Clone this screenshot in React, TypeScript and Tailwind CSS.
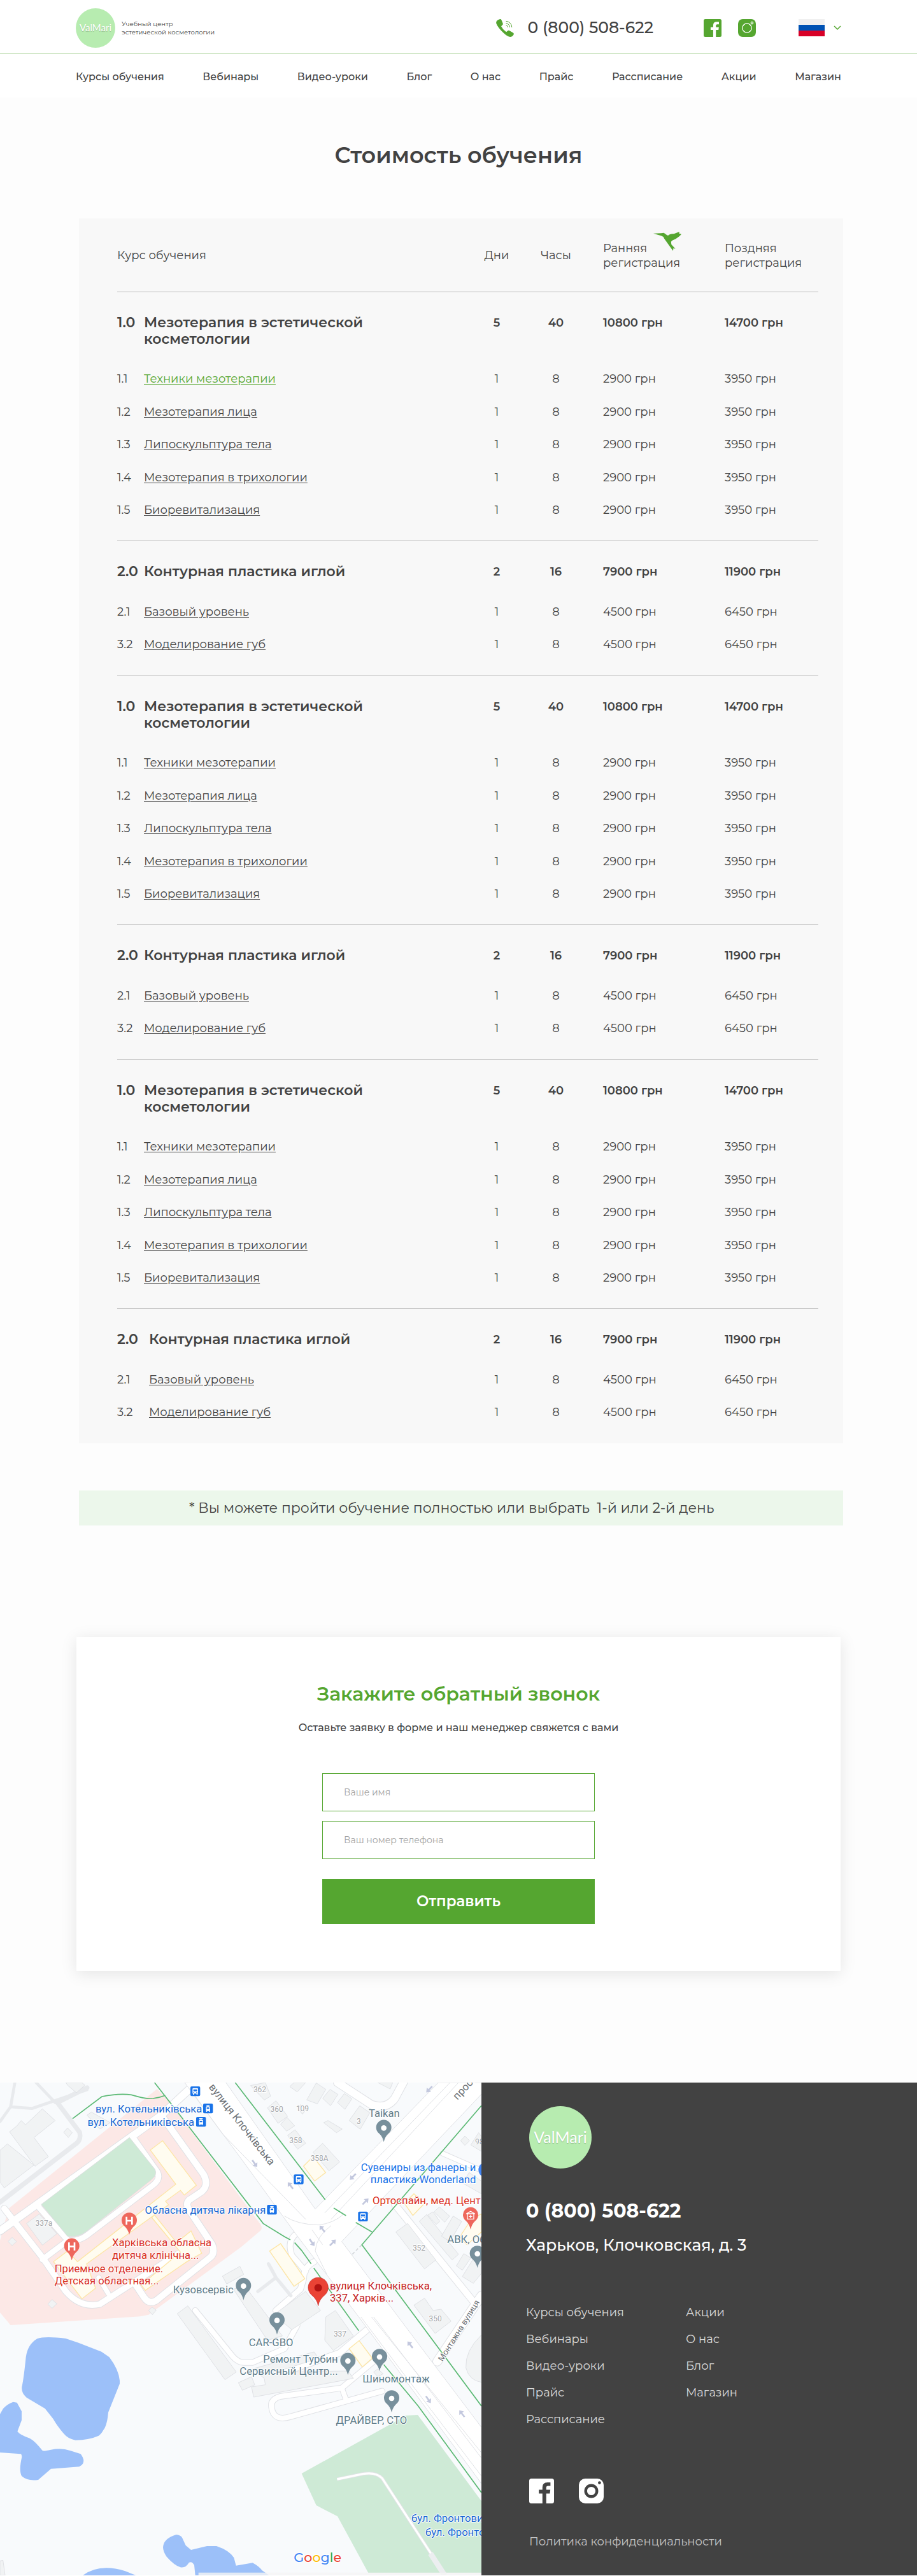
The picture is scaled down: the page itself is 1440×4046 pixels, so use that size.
import type { ReactNode } from "react";

type Lesson = { num: string; name: string; early: string; late: string; active?: boolean };
type Group = {
  num: string;
  name: string;
  days: string;
  hours: string;
  early: string;
  late: string;
  wide?: boolean;
  lessons: Lesson[];
};

const mesoLessons: Lesson[] = [
  "Техники мезотерапии",
  "Мезотерапия лица",
  "Липоскульптура тела",
  "Мезотерапия в трихологии",
  "Биоревитализация",
].map((name, i) => ({ num: `1.${i + 1}`, name, early: "2900 грн", late: "3950 грн" }));

const meso: Group = {
  num: "1.0",
  name: "Мезотерапия в эстетической косметологии",
  days: "5",
  hours: "40",
  early: "10800 грн",
  late: "14700 грн",
  lessons: mesoLessons,
};

const contour: Group = {
  num: "2.0",
  name: "Контурная пластика иглой",
  days: "2",
  hours: "16",
  early: "7900 грн",
  late: "11900 грн",
  lessons: [
    { num: "2.1", name: "Базовый уровень", early: "4500 грн", late: "6450 грн" },
    { num: "3.2", name: "Моделирование губ", early: "4500 грн", late: "6450 грн" },
  ],
};

const groups: Group[] = [
  { ...meso, lessons: mesoLessons.map((l, i) => ({ ...l, active: i === 0 })) },
  contour,
  meso,
  contour,
  meso,
  { ...contour, wide: true },
];

const nav = ["Курсы обучения", "Вебинары", "Видео-уроки", "Блог", "О нас", "Прайс", "Рассписание", "Акции", "Магазин"];

function PhoneIcon() {
  return (
    <svg viewBox="0 0 28 28" className="size-7 shrink-0" aria-hidden="true">
      <path
        fill="#55a630"
        d="M3 1.2 6.2.1Q7.8-.2 8.5 1.5L10.6 6.6Q11.2 8.4 9.8 9.6L8 11.2Q10.600 16.600 16 20.200L18.200 18.400Q19.600 17.400 21.200 18.300L26.800 21.600Q28.400 22.700 27.500 24.400 25.600 27.800 22.200 27.900 18 27.700 12 22 2.500 13 .2 6.400-.3 3 3 1.200Z"
      />
      <g fill="none" stroke="#55a630" strokeWidth="1">
        <path d="M15.600 3.400a9.500 9.500 0 0 1 9.200 9.600" />
        <path d="M15.600 6.600a6.500 6.500 0 0 1 6 6.400" />
        <path d="M15.600 9.800a3.300 3.300 0 0 1 3 3.200" />
      </g>
    </svg>
  );
}

function FacebookIcon({ className }: { className: string }) {
  return (
    <svg viewBox="0 0 39 39" className={className} fill="currentColor" fillRule="evenodd" aria-hidden="true">
      <path d="M3.500 0h32A3.500 3.500 0 0 1 39 3.500v32a3.500 3.500 0 0 1-3.500 3.500H26.800V23.600h5.600l.8-6H26.800V14q0-2.600 2.800-2.600H33.400V6h-4.600Q20.800 6 20.800 13.600v4H15.200v6h5.600V39H3.500A3.500 3.500 0 0 1 0 35.500v-32A3.500 3.500 0 0 1 3.500 0Z" />
    </svg>
  );
}

function InstagramIcon({ className, outlined }: { className: string; outlined?: boolean }) {
  return (
    <svg viewBox="0 0 39 39" className={className} aria-hidden="true">
      <rect width="39" height="39" rx="10" fill="currentColor" />
      <circle
        cx="19.500"
        cy="19.500"
        r={outlined ? 10 : 8.8}
        fill="none"
        stroke={outlined ? "#fff" : "#424242"}
        strokeWidth={outlined ? 1.8 : 4.4}
      />
      {outlined ? (
        <circle cx="30.500" cy="8.500" r="2.300" fill="none" stroke="#fff" strokeWidth="1.800" />
      ) : (
        <circle cx="32.400" cy="6.600" r="2.400" fill="#424242" />
      )}
    </svg>
  );
}

function Logo({ large }: { large?: boolean }) {
  return (
    <a
      href="#"
      className={
        large
          ? "flex size-[98px] items-center justify-center rounded-full bg-[#b7ecb0] font-[Lato,sans-serif] text-[25px] text-white"
          : "flex size-[62px] shrink-0 items-center justify-center rounded-full bg-[#b7ecb0] font-[Lato,sans-serif] text-[15px] text-white"
      }
    >
      <span className="[text-shadow:0_1px_1px_rgb(0_0_0/0.2)]">ValMari</span>
    </a>
  );
}

function Header() {
  return (
    <header className="bg-white text-[#424242]">
      <div className="border-b-2 border-[#d3e8ca]">
        <div className="mx-auto flex min-h-[83px] max-w-[1202px] items-center pt-1">
          <Logo />
          <p className="ml-[10px] text-[10px] leading-[13px]">
            Учебный центр
            <br />
            эстетической косметологии
          </p>
          <a href="tel:0800508622" className="ml-auto flex items-center gap-[22px] text-[25px] font-medium">
            <PhoneIcon />
            0 (800) 508-622
          </a>
          <div className="ml-[79px] flex gap-[26px] text-[#55a630]">
            <a href="#" aria-label="Facebook">
              <FacebookIcon className="size-7" />
            </a>
            <a href="#" aria-label="Instagram">
              <InstagramIcon className="size-7" outlined />
            </a>
          </div>
          <button type="button" aria-label="Выбрать язык" className="ml-[67px] flex items-center gap-[14px]">
            <span className="flex h-[27px] w-[41px] flex-col">
              <span className="flex-1 bg-[#f0f0f0]" />
              <span className="flex-1 bg-[#0052b4]" />
              <span className="flex-1 bg-[#d80027]" />
            </span>
            <svg viewBox="0 0 12 8" className="h-2 w-3" fill="none" stroke="#55a630" strokeWidth="1.500" aria-hidden="true">
              <path d="m1 1 5 5 5-5" />
            </svg>
          </button>
        </div>
      </div>
      <nav className="mx-auto flex min-h-[68px] max-w-[1202px] items-center justify-between pt-1 text-base font-medium">
        {nav.map((n) => (
          <a key={n} href="#">
            {n}
          </a>
        ))}
      </nav>
    </header>
  );
}

function Hummingbird() {
  return (
    <svg
      viewBox="0 0 98 90"
      preserveAspectRatio="none"
      className="absolute -top-[15px] left-[79px] h-[30px] w-[44px]"
      aria-hidden="true"
    >
      <path
        fill="#55a630"
        d="M0 8 27 7 36 5Q42 8 44 13L51 18 57 13Q64 9 72 10L91 0 90 8 98 11 92 20Q80 34 65 42L62 47 63 60 77 80 70 78 69 90 61 76 38 32 35 24 27 19Z"
      />
    </svg>
  );
}

function Cells({ values, bold }: { values: string[]; bold?: boolean }) {
  const [days, hours, early, late] = values;
  const tone = bold ? "align-top pt-[35px] leading-[26px] font-semibold" : "";
  return (
    <>
      <td className={`text-center ${tone}`}>{days}</td>
      <td className={`text-center ${tone}`}>{hours}</td>
      <td className={`pl-[27px] ${tone}`}>{early}</td>
      <td className={tone}>{late}</td>
    </>
  );
}

function PriceTable() {
  return (
    <div className="bg-[#f8f8f8] pr-[39px] pl-[60px]">
      <table className="w-full table-fixed border-collapse text-left text-lg text-[#424242]">
        <colgroup>
          <col />
          <col className="w-[92px]" />
          <col className="w-[94px]" />
          <col className="w-[218px]" />
          <col className="w-[147px]" />
        </colgroup>
        <thead>
          <tr className="h-[115px] leading-[23px]">
            <th className="pt-[3px] font-normal">Курс обучения</th>
            <th className="pt-[3px] text-center font-normal">Дни</th>
            <th className="pt-[3px] text-center font-normal">Часы</th>
            <th className="pt-[3px] pl-[27px] font-normal">
              <span className="relative block">
                Ранняя
                <br />
                регистрация
                <Hummingbird />
              </span>
            </th>
            <th className="pt-[3px] font-normal">
              Поздняя
              <br />
              регистрация
            </th>
          </tr>
        </thead>
        {groups.map((g, i) => (
          <tbody key={i} className="border-t border-[#b8b8b8]">
            <tr>
              <th className="pt-[35px] pb-6 align-top text-[22px] leading-[26px] font-semibold">
                <span className="flex">
                  <span className={g.wide ? "w-[50px] shrink-0" : "w-[42px] shrink-0"}>{g.num}</span>
                  <span className="max-w-[400px]">{g.name}</span>
                </span>
              </th>
              <Cells bold values={[g.days, g.hours, g.early, g.late]} />
            </tr>
            {g.lessons.map((l) => (
              <tr key={l.num} className="h-[51px] odd:h-[52px]">
                <td>
                  <span className="flex">
                    <span className={g.wide ? "w-[50px] shrink-0" : "w-[42px] shrink-0"}>{l.num}</span>
                    <a
                      href="#"
                      className={
                        l.active ? "text-[#55a630] underline underline-offset-2" : "underline underline-offset-2"
                      }
                    >
                      {l.name}
                    </a>
                  </span>
                </td>
                <Cells values={["1", "8", l.early, l.late]} />
              </tr>
            ))}
            <tr className="h-[23px]">
              <td colSpan={5} />
            </tr>
          </tbody>
        ))}
      </table>
    </div>
  );
}

function CallbackForm() {
  const field =
    "h-[60px] w-full border border-[#55a630] bg-white px-[33px] text-sm text-[#424242] outline-none placeholder:text-[#a3a3a3]";
  return (
    <form
      className="mx-auto flex max-w-[1200px] flex-col items-center bg-white pt-[71px] pb-[74px] shadow-[0_4px_24px_rgb(0_0_0/0.1)]"
      onSubmit={(e) => e.preventDefault()}
    >
      <h2 className="text-3xl leading-[38px] font-semibold text-[#55a630]">Закажите обратный звонок</h2>
      <p className="mt-[22px] text-base leading-6 font-medium text-[#424242]">
        Оставьте заявку в форме и наш менеджер свяжется с вами
      </p>
      <div className="mt-[59px] flex w-full max-w-[428px] flex-col gap-[15px]">
        <input type="text" aria-label="Ваше имя" placeholder="Ваше имя" className={field} />
        <input type="tel" aria-label="Ваш номер телефона" placeholder="Ваш номер телефона" className={field} />
        <button type="submit" className="mt-4 h-[71px] bg-[#55a630] text-[23px] font-semibold text-white">
          Отправить
        </button>
      </div>
    </form>
  );
}

const buildings = [
  "80,240 100,215 120,235 200,160 260,215 160,295 228,385 165,430 45,268",
  "0,355 35,325 160,425 20,532 0,505",
  "300,270 318,250 340,272 322,295",
  "320,50 360,84 400,48 385,36 310,36",
  "410,190 430,175 520,225 470,255",
  "125,700 185,655 268,748 200,802",
  "38,785 57,766 78,785 57,804",
  "225,1080 245,1058 268,1078 245,1100",
  "700,1110 716,1094 736,1108 718,1130",
  "1048,948 1130,902 1148,940 1068,985",
  "835,1125 885,1088 1113,1400 1060,1436",
  "1100,1010 1150,990 1330,1230 1260,1250",
  "1180,50 1250,36 1275,100 1245,118",
  "1260,155 1300,122 1355,195 1310,228",
  "1322,232 1352,200 1388,240 1350,265",
  "1355,285 1390,258 1440,322 1402,350",
  "1365,55 1385,36 1440,36 1400,80",
  "1445,118 1490,38 1535,68 1495,136",
  "1520,110 1555,68 1592,92 1557,145",
  "1590,130 1622,88 1658,112 1625,162",
  "1645,215 1695,145 1742,178 1697,256",
  "1415,140 1440,165 1425,185 1405,160",
  "1525,225 1545,215 1612,255 1585,272",
  "1475,365 1520,322 1600,410 1550,452",
  "1780,36 1850,36 1838,66",
  "2170,310 2190,288 2212,310 2190,332",
  "2218,330 2255,272 2268,290 2268,360",
  "2180,510 2210,460 2268,500 2268,560",
  "1865,740 1920,700 2053,872 2000,914",
  "1975,690 2010,658 2160,845 2130,872",
  "2015,660 2040,645 2072,690 2055,704",
  "2045,645 2070,622 2118,665 2095,694",
  "2080,760 2135,665 2175,690 2120,785",
  "2150,900 2185,842 2218,862 2178,920",
  "2178,950 2240,850 2268,870 2268,935 2230,982",
  "1950,1085 2000,1052 2040,1110 2078,1104 2125,1160 2050,1218",
  "1290,1130 1440,1020 1510,1110 1375,1200",
  "1535,1140 1580,1110 1665,1230 1570,1298 1530,1250",
  "1190,1385 1480,1305 1500,1335 1300,1400 1640,1395 1665,1430 1195,1518 1185,1470 1250,1460 1245,1430",
  "1123,1450 1185,1422 1200,1460 1142,1486",
  "1760,1400 1780,1385 1805,1408 1780,1422",
  "1550,845 1570,838 1610,895 1592,904",
  "1600,912 1618,905 2268,1780 2268,1810",
  "0,2290 14,2287 24,2358 0,2358",
];

const yellowBuildings = [
  "708,354 766,310 925,520 868,566 850,544 780,595 794,612 408,890 450,1005 386,1055 252,880 318,830 365,880 828,515",
  "715,672 728,660 832,790 900,735 950,840 880,880 685,1015 665,990 850,835",
  "1270,830 1322,795 1436,960 1385,996",
  "1430,430 1475,385 1534,460 1482,500",
  "1905,605 1950,560 2000,605 1945,662",
  "2165,765 2220,680 2268,655 2268,740 2200,800",
  "1645,1290 1692,1252 1754,1335 1707,1376",
];

const roads: { d: string; w: number }[] = [
  { d: "M0 735 L760 190 L900 60", w: 34 },
  { d: "M20 630 L200 860 L310 1020 Q380 1100 470 1080 L860 830", w: 28 },
  { d: "M180 620 L320 780 L200 870", w: 26 },
  { d: "M320 780 Q370 785 410 755 L720 520 Q760 490 740 455 L620 285", w: 26 },
  { d: "M760 190 L960 470 Q985 520 950 550 L890 590 Q870 610 900 650 L1000 800 Q1015 840 990 860 L740 1060 Q705 1085 680 1050 L640 990", w: 30 },
  { d: "M510 1030 L465 955", w: 22 },
  { d: "M1400 745 Q1350 780 1375 850 L1440 925", w: 24 },
  { d: "M1480 880 Q1430 905 1430 960 L1415 1010 L1300 1110", w: 26 },
  { d: "M920 1110 L1095 1325 Q1120 1355 1150 1355 L1190 1355 L1340 1290 L1400 1180", w: 24 },
  { d: "M1340 1400 L1600 1310 L1730 1200", w: 28 },
  { d: "M1800 1490 L1370 1610 Q1290 1635 1280 1570 Q1270 1530 1320 1515 L1610 1475 L1760 1350", w: 24 },
  { d: "M1610 1475 L1632 1535", w: 22 },
  { d: "M1590 36 L1750 140 Q1820 165 1860 110 L1900 36", w: 36 },
  { d: "M1860 610 L2240 1080", w: 30 },
  { d: "M2268 1040 L2060 1350", w: 40 },
  { d: "M2085 370 L2268 450", w: 20 },
];

const greenLines = [
  "M342 206 L480 102 Q560 86 620 94 Q690 115 720 111 Q760 104 778 96",
  "M728 36 L870 218 L1240 700 L1340 762 L1368 777",
  "M1108 36 L1532 588",
  "M1572 627 L1630 663",
  "M1676 695 L1753 740",
  "M2268 145 L1705 800 L2268 1560",
  "M1388 790 L1420 826 L1466 890",
  "M1478 910 L1690 1205",
  "M1808 1365 L1970 1560 L2268 1968",
];

const arrows: [number, number, number][] = [
  [1200, 418, 55],
  [1368, 521, 232],
  [1662, 480, 135],
  [1722, 596, 315],
  [2022, 68, 135],
  [1518, 725, 232],
  [1470, 790, 55],
  [1568, 790, 315],
  [1932, 1271, 232],
  [2018, 1530, 55],
  [2176, 1596, 232],
];

function Pin({ x, y, color, children }: { x: number; y: number; color: string; children?: ReactNode }) {
  return (
    <g transform={`translate(${x} ${y})`}>
      <path d="M0 66 Q-6 40-22 26 A36 36 0 1 1 22 26 Q6 40 0 66Z" fill={color} />
      {children ?? <circle r="13" fill="#fff" />}
    </g>
  );
}

function Stop({ x, y, tram }: { x: number; y: number; tram?: boolean }) {
  return (
    <g transform={`translate(${x} ${y})`}>
      <rect x="-23" y="-23" width="46" height="46" rx="6" fill="#1a73e8" />
      {tram ? (
        <path
          fillRule="evenodd"
          fill="#fff"
          d="M-8-17H8v3H2v4h5l3 4v15l-3 3 3 4H5L3 12H-3l-2 4h-5l3-4-3-3V-6l3-4h5v-4h-6ZM-6-5V2H6v-7Z"
        />
      ) : (
        <path
          fillRule="evenodd"
          fill="#fff"
          d="M-9-15H9q4 0 4 4V11H11v5H6v-5H-6v5h-5v-5h-2v-22q0-4 4-4ZM-9-9V0H9v-9ZM-9 4v4h4V4ZM5 4v4h4V4Z"
        />
      )}
    </g>
  );
}

const labelStyle = "[paint-order:stroke] stroke-white [stroke-linejoin:round]";

type LabelProps = {
  x: number;
  y: number;
  color: string;
  size?: number;
  anchor?: "start" | "middle" | "end";
  children: ReactNode;
};

function Label({ x, y, color, size = 50, anchor = "start", children }: LabelProps) {
  return (
    <text x={x} y={y} fill={color} fontSize={size} textAnchor={anchor} strokeWidth="6" className={labelStyle}>
      {children}
    </text>
  );
}

const houseNumbers: [number, number, string][] = [
  [207, 711, "337а"],
  [1224, 82, "362"],
  [1304, 175, "360"],
  [1425, 170, "109"],
  [1690, 230, "3"],
  [1393, 320, "358"],
  [1505, 404, "358А"],
  [1974, 829, "352"],
  [2051, 1162, "350"],
  [1602, 1233, "337"],
  [2258, 327, "98"],
];

function CityMap() {
  const slate = "#607d8b";
  const red = "#d93025";
  const blue = "#1967d2";
  return (
    <svg
      viewBox="0 36 2268 2322"
      preserveAspectRatio="xMidYMid slice"
      className="block h-[774px] w-full font-[Roboto,sans-serif]"
      role="img"
      aria-label="Карта проезда"
    >
      <rect y="36" width="2268" height="2322" fill="#f8fafc" />
      <path fill="#fce8e6" d="M40 630 740 66 800 130 1090 520 1228 705Q1240 725 1222 738L1140 808 700 1130 660 1138 50 1179 0 1120V780Z" />
      <path
        fill="#ceead6"
        d="M1421 1878 1850 1640 1910 1605 1968 1602 2268 2008V2346H1735L1590 2080 1490 2028Z"
      />
      <path
        fill="#9cc0f9"
        d="M175 1243Q210 1230 310 1242L370 1262 478 1304 515 1330Q560 1390 564 1440V1455L510 1590Q505 1650 488 1672 475 1695 465 1700 420 1720 355 1721 320 1715 300 1690 270 1655 250 1620L212 1572 125 1520Q100 1500 103 1470 112 1430 122 1330 130 1270 175 1243ZM0 1598 15 1572Q35 1550 62 1541L80 1544 102 1585V1627L82 1680Q95 1697 140 1712 165 1725 200 1770 205 1774 240 1766 290 1756 330 1770L380 1786Q405 1820 385 1838L373 1846 240 1856 180 1908Q130 1915 102 1890 88 1865 103 1800 102 1785 96 1786L0 1779ZM390 2358Q470 2300 590 2338L640 2358ZM768 2225Q770 2185 830 2166 850 2168 858 2180L875 2217 900 2238 975 2220H1020Q1080 2240 1102 2275L1112 2312 1190 2299Q1220 2315 1235 2335L1268 2358H920L915 2310Q905 2290 890 2298 875 2325 850 2320 820 2310 785 2270 768 2245 768 2225Z"
      />
      <g fill="none" strokeLinecap="round" strokeLinejoin="round">
        <g stroke="#e8eaed">
          <path strokeWidth="14" d="M70 36 50 150 0 220M50 150 150 158 410 70M170 36 260 130" />
          <path strokeWidth="22" d="M270 130 375 270Q385 310 350 330L0 600M280 125 410 60" />
        </g>
        {roads.map((r) => (
          <path key={r.d} d={r.d} stroke="#dfe1e5" strokeWidth={r.w + 6} />
        ))}
        {roads.map((r) => (
          <path key={r.d} d={r.d} stroke="#fff" strokeWidth={r.w} />
        ))}
      </g>
      <path fill="#ceead6" stroke="#dcdfe0" strokeWidth="3" d="M195 610 610 295 730 445Q742 470 715 492L410 735Q370 768 318 760Z" />
      <g fill="#f1f3f4" stroke="#dfe1e5" strokeWidth="3">
        {buildings.map((p) => (
          <polygon key={p} points={p} />
        ))}
      </g>
      <g fill="#fffcf0" stroke="#fde5a5" strokeWidth="4">
        {yellowBuildings.map((p) => (
          <polygon key={p} points={p} />
        ))}
      </g>

      <g fill="#fff" stroke="#dfe1e5" strokeWidth="3">
        <path d="M870 36 1140 400 1390 745 1690 1140 2268 1925V1660L2030 1345 1610 785 2320 36H2065L1485 632 1060 30Z" />
      </g>
      <g fill="none" stroke="#dfe1e5" strokeWidth="3">
        <path d="M920 100 1050 280 1440 680M1760 1140 2268 1805M1750 1140 2268 1780M1700 1140 1880 1380 2268 1890" />
        <path d="M1530 650 2120 36M1560 680 2160 36M1340 665Q1400 705 1500 707 1570 700 1620 655M1485 830Q1490 760 1560 710M1485 830 1540 940M1470 730 1520 800" />
        <path d="M2268 1225Q2190 1300 2195 1380 2210 1440 2268 1448" fill="#f1f3f4" />
      </g>
      <path d="M1588 1905 1710 1880Q1770 1870 1800 1900L2030 2255" fill="none" stroke="#e1e3e6" strokeWidth="16" />
      <path d="M1588 1905 1710 1880Q1770 1870 1800 1900L2030 2255" fill="none" stroke="#fff" strokeWidth="10" />
      <path d="M2028 2255 2095 2358" stroke="#eceef0" strokeWidth="26" />
      <path d="M1215 1020 1300 955 1265 890M1300 955 1370 1040" fill="none" stroke="#e8eaed" strokeWidth="16" strokeLinecap="round" />
      <path d="M1660 845 1705 800" stroke="#d5d8dc" strokeWidth="5" strokeDasharray="14 10" />
      <g fill="none" stroke="#5bb974" strokeWidth="5">
        {greenLines.map((d) => (
          <path key={d} d={d} />
        ))}
      </g>
      <g fill="#c3c8de">
        {arrows.map(([x, y, a]) => (
          <path key={`${x}-${y}`} transform={`translate(${x} ${y}) rotate(${a})`} d="M-20-4H2V-14L20 0 2 14V4H-20Z" />
        ))}
      </g>

      {houseNumbers.map(([x, y, t]) => (
        <Label key={t} x={x} y={y} color="#a3a6aa" size={36} anchor="middle">
          {t}
        </Label>
      ))}
      <g fill="#6b7075" stroke="#fff" strokeWidth="6" className="[paint-order:stroke]">
        <text transform="translate(982 58) rotate(52)" fontSize="50">
          вулиця Клочківська
        </text>
        <text transform="translate(2155 120) rotate(-47)" fontSize="50">
          просп
        </text>
        <text transform="translate(2085 1352) rotate(-58)" fontSize="39">
          Монтажна вулиця
        </text>
      </g>

      <Label x={952} y={176} color={blue} anchor="end">вул. Котельниківська</Label>
      <Label x={915} y={239} color={blue} anchor="end">вул. Котельниківська</Label>
      <Label x={1252} y={654} color={blue} anchor="end">Обласна дитяча лікарня</Label>
      <Label x={1938} y={2105} color={blue}>бул. Фронтови</Label>
      <Label x={2004} y={2172} color={blue}>бул. Фронто</Label>
      <Label x={2242} y={452} color="#1a73e8" anchor="end">Сувениры из фанеры и</Label>
      <Label x={2242} y={509} color="#1a73e8" anchor="end">пластика Wonderland</Label>
      <Label x={1755} y={609} color={red}>Ортоспайн, мед. Цент</Label>
      <Label x={528} y={808} color={red}>Харківська обласна</Label>
      <Label x={528} y={866} color={red}>дитяча клінічна...</Label>
      <Label x={257} y={929} color={red}>Приемное отделение.</Label>
      <Label x={257} y={987} color={red}>Детская областная...</Label>
      <Label x={1554} y={1010} color="#c5221f">вулиця Клочківська,</Label>
      <Label x={1554} y={1068} color="#c5221f">337, Харків...</Label>
      <Label x={1100} y={1029} color={slate} anchor="end">Кузовсервіс</Label>
      <Label x={1810} y={198} color={slate} anchor="middle">Taikan</Label>
      <Label x={2107} y={791} color={slate}>АВК, Об</Label>
      <Label x={1277} y={1277} color={slate} anchor="middle">CAR-GBO</Label>
      <Label x={1592} y={1355} color={slate} anchor="end">Ремонт Турбин</Label>
      <Label x={1592} y={1412} color={slate} anchor="end">Сервисный Центр...</Label>
      <Label x={1866} y={1449} color={slate} anchor="middle">Шиномонтаж</Label>
      <Label x={1750} y={1644} color={slate} anchor="middle">ДРАЙВЕР, СТО</Label>

      <Stop x={920} y={77} />
      <Stop x={980} y={158} tram />
      <Stop x={947} y={221} tram />
      <Stop x={1281} y={635} tram />
      <Stop x={1407} y={492} />
      <Stop x={1710} y={667} />
      <circle cx="2290" cy="447" r="36" fill="#4285f4" />

      <Pin x={1147} y={995} color="#78909c" />
      <Pin x={1808} y={250} color="#78909c" />
      <Pin x={2249} y={843} color="#78909c" />
      <Pin x={1305} y={1157} color="#78909c" />
      <Pin x={1639} y={1348} color="#78909c" />
      <Pin x={1788} y={1329} color="#78909c" />
      <Pin x={1845} y={1524} color="#78909c" />
      <Pin x={609} y={687} color="#ee675c">
        <path d="M-13-19V19M13-19V19M-13 0H13" stroke="#fff" strokeWidth="8" />
      </Pin>
      <Pin x={338} y={808} color="#ee675c">
        <path d="M-13-19V19M13-19V19M-13 0H13" stroke="#fff" strokeWidth="8" />
      </Pin>
      <Pin x={2217} y={662} color="#ee675c">
        <path d="M-15-8V17H15V-8M-20-8H20L0-19ZM0-3V13M-8 5H8" fill="none" stroke="#fff" strokeWidth="4" />
      </Pin>
      <g transform="translate(1499 1003)">
        <path d="M0 85 Q-4 55-32 33 A47 47 0 1 1 32 33 Q4 55 0 85Z" fill="#ea4335" stroke="#c5221f" strokeWidth="2" />
        <circle r="18" fill="#b31412" />
      </g>

      <text x="1384" y="2295" fontSize="62" fontWeight="500" strokeWidth="8" className={`${labelStyle} font-[Montserrat,sans-serif]`}>
        <tspan fill="#4285f4">G</tspan><tspan fill="#ea4335">o</tspan><tspan fill="#fbbc04">o</tspan><tspan fill="#4285f4">g</tspan><tspan fill="#34a853">l</tspan><tspan fill="#ea4335">e</tspan>
      </text>
      <rect x="935" y="2345" width="1333" height="13" fill="#f5f5f5" fillOpacity="0.8" />
    </svg>
  );
}

const footerColumns = [
  ["Курсы обучения", "Вебинары", "Видео-уроки", "Прайс", "Рассписание"],
  ["Акции", "О нас", "Блог", "Магазин"],
];

function Footer() {
  return (
    <footer className="grid grid-cols-[21fr_19fr] bg-[#424242]">
      <CityMap />
      <div className="pt-[37px] pl-[70px] text-white">
        <div className="pl-[5px]">
          <Logo large />
        </div>
        <a href="tel:0800508622" className="mt-[48px] block text-3xl leading-[38px] font-bold">
          0 (800) 508-622
        </a>
        <address className="mt-[18px] text-[25px] leading-8 font-medium not-italic">Харьков, Клочковская, д. 3</address>
        <div className="mt-[79px] flex text-lg leading-[22px] text-[#d9d9d9]">
          {footerColumns.map((col) => (
            <ul key={col[0]} className="flex w-[251px] flex-col gap-5">
              {col.map((n) => (
                <li key={n}>
                  <a href="#">{n}</a>
                </li>
              ))}
            </ul>
          ))}
        </div>
        <div className="mt-[82px] flex gap-[39px] pl-[5px]">
          <a href="#" aria-label="Facebook">
            <FacebookIcon className="size-[39px]" />
          </a>
          <a href="#" aria-label="Instagram">
            <InstagramIcon className="size-[39px]" />
          </a>
        </div>
        <a href="#" className="mt-[48px] block pl-[5px] text-lg leading-[24px] text-[#c4c4c4]">
          Политика конфиденциальности
        </a>
      </div>
    </footer>
  );
}

export default function App() {
  return (
    <div className="bg-[#fdfdfd] font-[Montserrat,Inter,sans-serif]">
      <Header />
      <main className="pb-[175px]">
        <h1 className="pt-[70px] text-center text-[35px] leading-[42px] font-semibold text-[#424242]">
          Стоимость обучения
        </h1>
        <div className="mx-auto mt-[78px] max-w-[1208px] pl-2">
          <PriceTable />
          <p className="mt-[74px] bg-[#ecf7eb] pl-[173px] text-[22px] leading-[55px] whitespace-pre-wrap text-[#424242]">
            {"* Вы можете пройти обучение полностью или выбрать  1-й или 2-й день"}
          </p>
        </div>
        <div className="mt-[175px]">
          <CallbackForm />
        </div>
      </main>
      <Footer />
    </div>
  );
}
